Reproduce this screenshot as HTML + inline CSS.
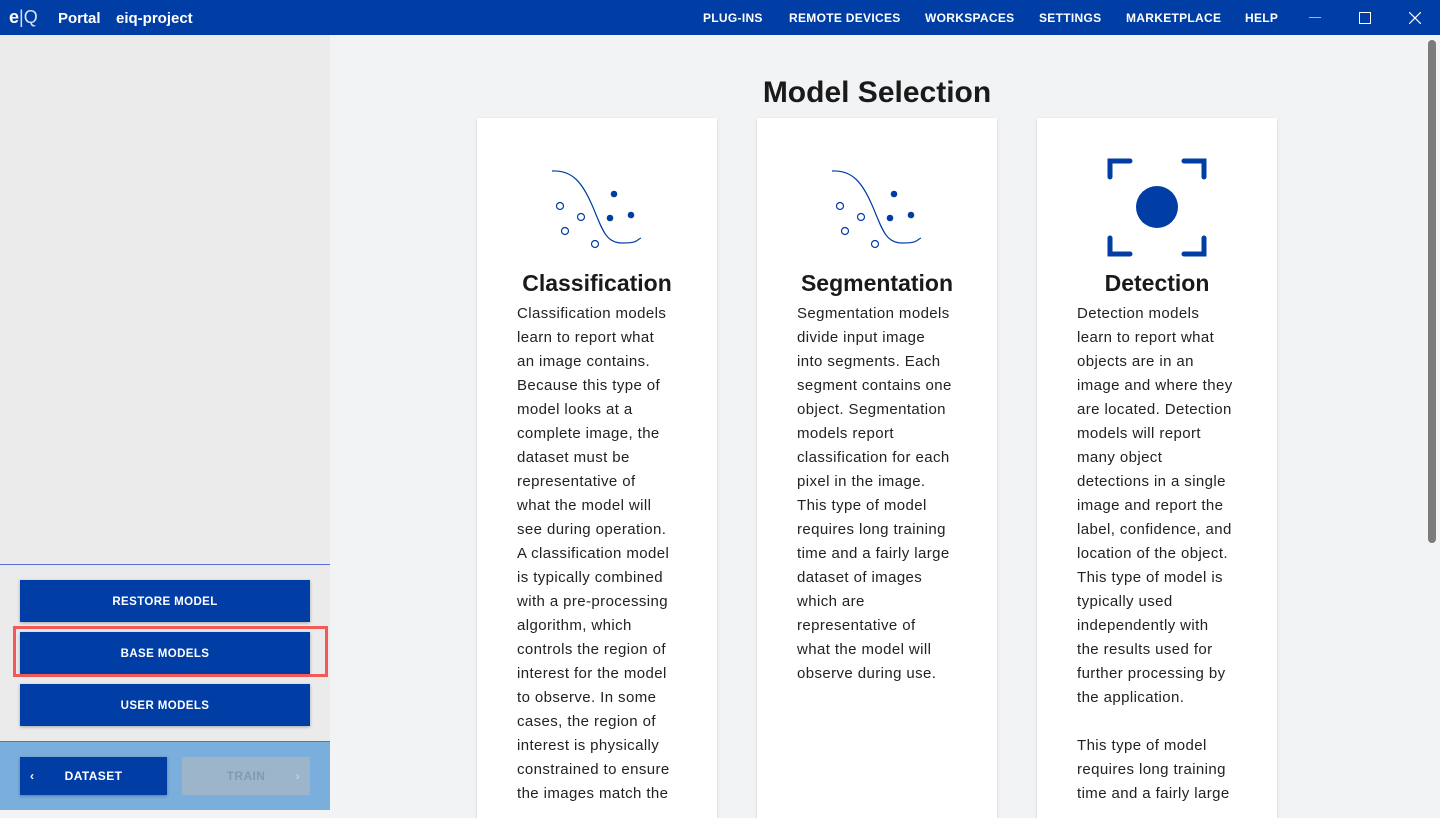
<!DOCTYPE html>
<html><head><meta charset="utf-8"><style>
*{margin:0;padding:0;box-sizing:border-box}
body{width:1440px;height:810px;overflow:hidden;background:#f2f3f5;font-family:"Liberation Sans",sans-serif;position:relative}
.top{position:absolute;left:0;top:0;width:1440px;height:35px;background:#003da5;color:#fff}
.top .t{position:absolute;top:10px;font-weight:bold;font-size:15px}
.nav{position:absolute;top:11px;font-size:12px;font-weight:bold;letter-spacing:.3px}
.side{position:absolute;left:0;top:35px;width:330px;height:775px;background:#ebebeb}
.btn{position:absolute;background:#003da5;color:#fff;font-size:11.5px;font-weight:bold;letter-spacing:.4px;text-align:center;box-shadow:0 1px 3px rgba(0,0,0,.3)}
.card{position:absolute;top:118px;width:240px;height:700px;background:#fff;box-shadow:0 1px 3px rgba(0,0,0,.15)}
.card h2{position:absolute;top:152px;width:100%;text-align:center;font-size:23px;color:#1a1a1a}
.card p{position:absolute;left:40px;top:184px;width:195px;font-size:15px;line-height:24px;color:#222;white-space:nowrap;letter-spacing:.4px}
</style></head><body>
<div class="top">
<div class="t" style="left:9px;font-size:18px;top:7px;font-weight:bold">e<span style="font-weight:normal;opacity:.85">|Q</span></div>
<div class="t" style="left:58px">Portal</div>
<div class="t" style="left:116px">eiq-project</div>
<div class="nav" style="left:703px">PLUG-INS</div>
<div class="nav" style="left:789px">REMOTE DEVICES</div>
<div class="nav" style="left:925px">WORKSPACES</div>
<div class="nav" style="left:1039px">SETTINGS</div>
<div class="nav" style="left:1126px">MARKETPLACE</div>
<div class="nav" style="left:1245px">HELP</div>
<div style="position:absolute;left:1309px;top:17px;width:12px;height:1px;background:#9fb6e0"></div>
<div style="position:absolute;left:1359px;top:12px;width:12px;height:12px;border:1px solid #fff"></div>
<svg style="position:absolute;left:1409px;top:12px" width="12" height="12"><path d="M0 0L12 12M12 0L0 12" stroke="#fff" stroke-width="1.2"/></svg>
</div>
<div class="side">
<div style="position:absolute;top:529px;left:0;width:330px;height:1px;background:#5a6fd6"></div>
<div class="btn" style="left:20px;top:545px;width:290px;height:42px;line-height:44px">RESTORE MODEL</div>
<div class="btn" style="left:20px;top:597px;width:290px;height:42px;line-height:44px">BASE MODELS</div>
<div style="position:absolute;left:13px;top:591px;width:315px;height:51px;border:3px solid #f25a5a"></div>
<div class="btn" style="left:20px;top:649px;width:290px;height:42px;line-height:44px">USER MODELS</div>
<div style="position:absolute;left:0;top:706px;width:330px;height:69px;background:#7aaedc;border-top:1px solid #5a6fd6"></div>
<div class="btn" style="left:20px;top:722px;width:147px;height:38px;line-height:38px;font-size:12px"><span style="position:absolute;left:10px">&#8249;</span>DATASET</div>
<div class="btn" style="left:182px;top:722px;width:128px;height:38px;line-height:38px;font-size:12px;background:#9cb5ca;color:#8399ad;box-shadow:none">TRAIN<span style="position:absolute;right:10px;color:#c0d0de">&#8250;</span></div>
</div>
<div style="position:absolute;left:1428px;top:40px;width:8px;height:503px;background:#7b7b7b;border-radius:4px"></div>
<div style="position:absolute;left:477px;width:800px;top:76px;text-align:center;font-size:30px;font-weight:bold;color:#1a1a1a">Model Selection</div>

<div class="card" style="left:477px">
<svg style="position:absolute;left:0;top:0" width="240" height="140"><g transform="translate(-477,-118)"><path d="M552 171C572 170 582 182 592 205S605 243 622 243S636 240 641 238" fill="none" stroke="#003da5" stroke-width="1.2"/><g fill="none" stroke="#003da5" stroke-width="1.2"><circle cx="560" cy="206" r="3.5"/><circle cx="581" cy="217" r="3.5"/><circle cx="565" cy="231" r="3.5"/><circle cx="595" cy="244" r="3.5"/></g><g fill="#003da5"><circle cx="614" cy="194" r="3.3"/><circle cx="610" cy="218" r="3.3"/><circle cx="631" cy="215" r="3.3"/></g></g></svg>
<h2>Classification</h2>
<p>Classification models<br>learn to report what<br>an image contains.<br>Because this type of<br>model looks at a<br>complete image, the<br>dataset must be<br>representative of<br>what the model will<br>see during operation.<br>A classification model<br>is typically combined<br>with a pre-processing<br>algorithm, which<br>controls the region of<br>interest for the model<br>to observe. In some<br>cases, the region of<br>interest is physically<br>constrained to ensure<br>the images match the</p>
</div>
<div class="card" style="left:757px">
<svg style="position:absolute;left:0;top:0" width="240" height="140"><g transform="translate(-477,-118)"><path d="M552 171C572 170 582 182 592 205S605 243 622 243S636 240 641 238" fill="none" stroke="#003da5" stroke-width="1.2"/><g fill="none" stroke="#003da5" stroke-width="1.2"><circle cx="560" cy="206" r="3.5"/><circle cx="581" cy="217" r="3.5"/><circle cx="565" cy="231" r="3.5"/><circle cx="595" cy="244" r="3.5"/></g><g fill="#003da5"><circle cx="614" cy="194" r="3.3"/><circle cx="610" cy="218" r="3.3"/><circle cx="631" cy="215" r="3.3"/></g></g></svg>
<h2>Segmentation</h2>
<p>Segmentation models<br>divide input image<br>into segments. Each<br>segment contains one<br>object. Segmentation<br>models report<br>classification for each<br>pixel in the image.<br>This type of model<br>requires long training<br>time and a fairly large<br>dataset of images<br>which are<br>representative of<br>what the model will<br>observe during use.</p>
</div>
<div class="card" style="left:1037px">
<svg style="position:absolute;left:0;top:0" width="240" height="150"><g transform="translate(-1037,-118)" fill="none" stroke="#003da5" stroke-width="5" stroke-linecap="round"><path d="M1110 177V161H1130M1184 161H1204V177M1110 238V254H1130M1184 254H1204V238"/><circle cx="1157" cy="207" r="21" fill="#003da5" stroke="none"/></g></svg>
<h2>Detection</h2>
<p>Detection models<br>learn to report what<br>objects are in an<br>image and where they<br>are located. Detection<br>models will report<br>many object<br>detections in a single<br>image and report the<br>label, confidence, and<br>location of the object.<br>This type of model is<br>typically used<br>independently with<br>the results used for<br>further processing by<br>the application.<br><br>This type of model<br>requires long training<br>time and a fairly large</p>
</div>
</body></html>
